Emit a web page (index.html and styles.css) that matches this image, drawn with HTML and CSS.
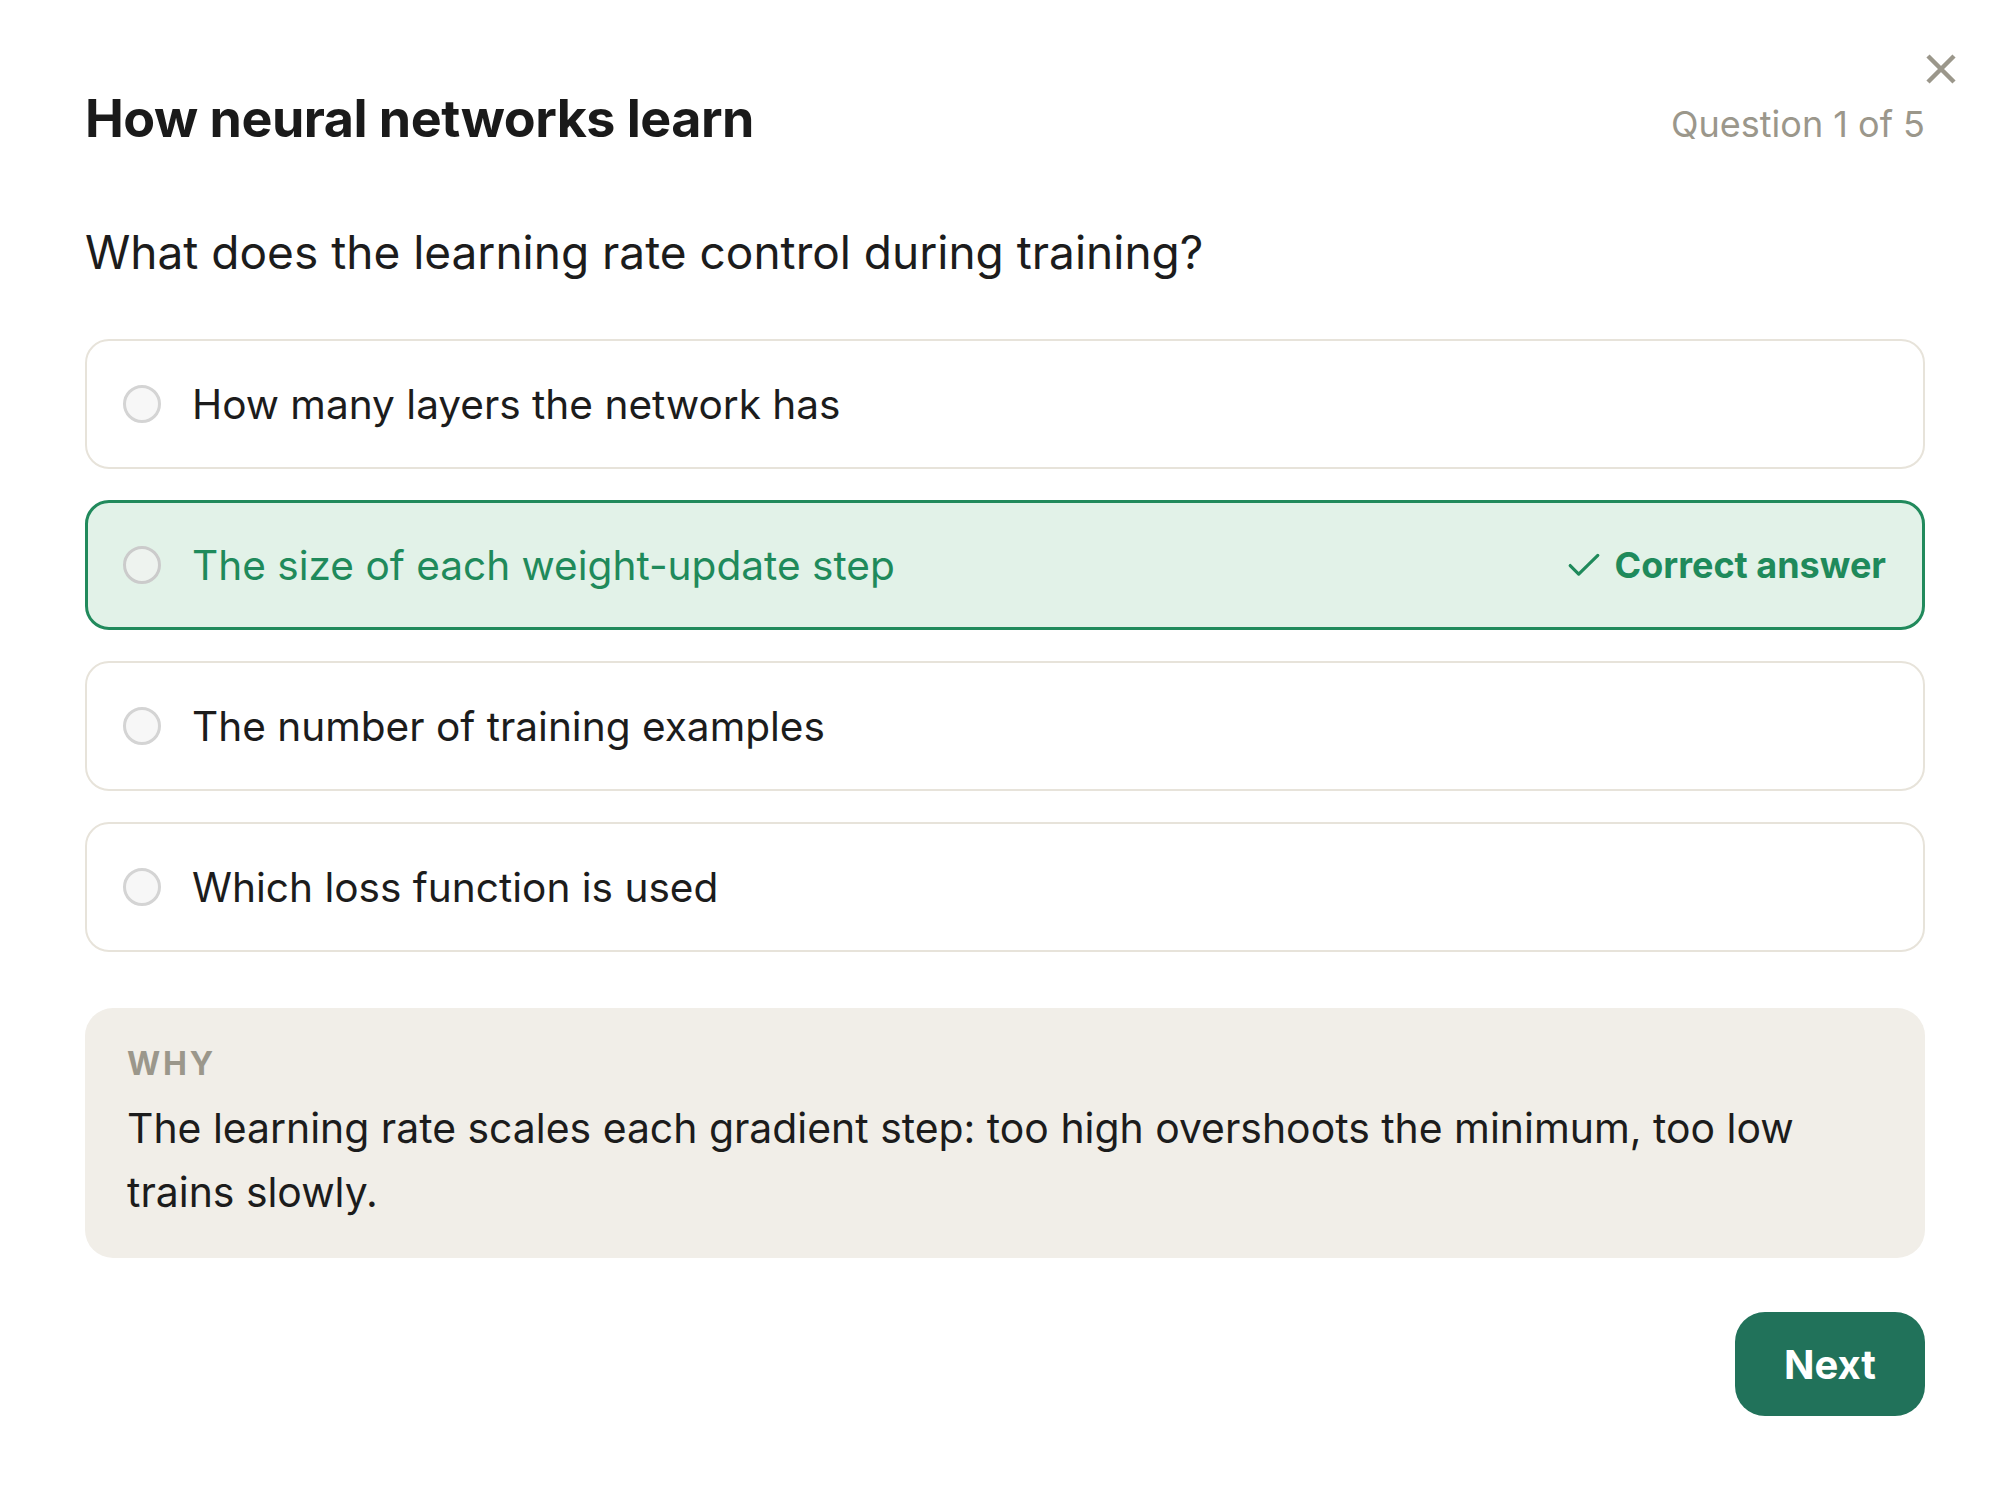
FILE: index.html
```html
<!DOCTYPE html>
<html lang="en">
<head>
<meta charset="utf-8">
<title>Quiz</title>
<link rel="stylesheet" href="styles.css">
</head>
<body>
<div class="quiz">
  <button class="close" aria-label="Close">
    <svg viewBox="0 0 32 32" width="32" height="32"><path d="M3 3L29 29M29 3L3 29" stroke="currentColor" stroke-width="4.5" fill="none"/></svg>
  </button>
  <header class="head">
    <h1 class="title">How neural networks learn</h1>
    <span class="progress">Question 1 of 5</span>
  </header>
  <p class="question">What does the learning rate control during training?</p>
  <div class="options">
    <div class="option"><span class="radio"></span><span class="label">How many layers the network has</span></div>
    <div class="option correct"><span class="radio"></span><span class="label">The size of each weight-update step</span>
      <span class="badge"><svg viewBox="0 0 32 24" width="34" height="26"><path d="M3 12.5L11 20.5L29 3" stroke="currentColor" stroke-width="3" fill="none" stroke-linecap="round" stroke-linejoin="round"/></svg>Correct answer</span>
    </div>
    <div class="option"><span class="radio"></span><span class="label">The number of training examples</span></div>
    <div class="option"><span class="radio"></span><span class="label">Which loss function is used</span></div>
  </div>
  <section class="why">
    <div class="why-title">WHY</div>
    <p class="why-text">The learning rate scales each gradient step: too high overshoots the minimum, too low trains slowly.</p>
  </section>
  <div class="actions">
    <button class="next">Next</button>
  </div>
</div>
</body>
</html>
```
FILE: styles.css
```css
* { box-sizing: border-box; }
html, body { margin: 0; background: #ffffff; }
body { font-family: Inter, "Noto Sans", sans-serif; color: #1c1c1c; }

.quiz {
  position: relative;
  padding: 88px 85px 0 85px;
}

.close {
  position: absolute;
  top: 53px;
  right: 53px;
  width: 32px;
  height: 32px;
  padding: 0;
  border: 0;
  background: none;
  color: #9b978b;
  display: flex;
}

.head {
  display: flex;
  justify-content: space-between;
  align-items: baseline;
}
.title {
  margin: 0;
  font-size: 52px;
  line-height: 62px;
  font-weight: 700;
  letter-spacing: -0.5px;
  color: #1a1a1a;
}
.progress {
  font-size: 36px;
  color: #9b978b;
}

.question {
  margin: 75px 0 60px 0;
  font-size: 46px;
  line-height: 54px;
  color: #1c1c1c;
}

.options {
  display: flex;
  flex-direction: column;
  gap: 31px;
}
.option {
  height: 130px;
  border: 2px solid #e7e3da;
  border-radius: 24px;
  display: flex;
  align-items: center;
  padding: 0 37px 0 36px;
  gap: 31px;
  font-size: 40.6px;
}
.radio {
  width: 38px;
  height: 38px;
  border-radius: 50%;
  border: 3px solid #d4d4d4;
  background: #f7f7f7;
  flex: none;
}
.label { flex: 1; }
.option.correct {
  background: #e2f2e8;
  border: 3px solid #218a5c;
  padding: 0 36px 0 35px;
  color: #1f8a5b;
}
.option.correct .radio {
  border-color: #cbcbcb;
  background: #eef3ef;
}
.badge {
  display: flex;
  align-items: center;
  gap: 14px;
  font-size: 36px;
  font-weight: 700;
  color: #1f8a5b;
}

.why {
  margin-top: 56px;
  background: #f1eee8;
  border-radius: 28px;
  padding: 38px 42px 34px 42px;
}
.why-title {
  font-size: 32px;
  line-height: 36px;
  font-weight: 700;
  letter-spacing: 2.8px;
  color: #9b978b;
}
.why-text {
  margin: 14px 0 0 0;
  font-size: 40.9px;
  line-height: 64px;
  color: #1c1c1c;
}

.actions {
  display: flex;
  justify-content: flex-end;
  margin-top: 54px;
}
.next {
  width: 190px;
  height: 104px;
  border: 0;
  border-radius: 30px;
  background: #21725a;
  color: #ffffff;
  font-family: Inter, "Noto Sans", sans-serif;
  font-size: 40px;
  font-weight: 700;
}
```
